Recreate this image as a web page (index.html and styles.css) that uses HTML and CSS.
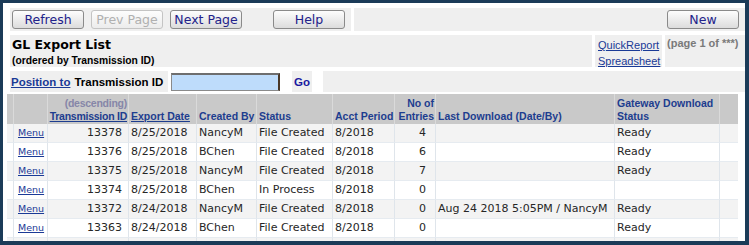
FILE: index.html
```html
<!DOCTYPE html>
<html>
<head>
  <title>GL Export List</title>
  <link rel="stylesheet" href="styles.css">
</head>
<body>
  <div class="frame">
    <div class="row bar">
      <div class="cell tools">
        <button class="btn">Refresh</button>
        <button class="btn" disabled>Prev Page</button>
        <button class="btn">Next Page</button>
        <button class="btn help">Help</button>
      </div>
      <div class="cell tools right">
        <button class="btn">New</button>
      </div>
    </div>

    <div class="row head">
      <div class="cell title">
        <div class="name">GL Export List</div>
        <div class="sub">(ordered by Transmission ID)</div>
      </div>
      <div class="cell links">
        <a href="#">QuickReport</a>
        <a href="#">Spreadsheet</a>
      </div>
      <div class="cell page">(page 1 of ***)</div>
    </div>

    <div class="row pos">
      <div class="cell label"><a href="#">Position to</a> Transmission ID</div>
      <div class="field"><input type="text"></div>
      <div class="cell go">Go</div>
      <div class="spacer"></div>
      <div class="cell fill"></div>
    </div>

    <table class="list">
      <thead>
        <tr>
          <th class="c-pad"></th>
          <th class="c-menu"></th>
          <th class="c-id num"><span class="desc">(descending)</span><br><a href="#">Transmission ID</a></th>
          <th class="c-date"><a href="#">Export Date</a></th>
          <th class="c-by">Created By</th>
          <th class="c-status">Status</th>
          <th class="c-period">Acct Period</th>
          <th class="c-entries num">No of<br>Entries</th>
          <th class="c-last">Last Download (Date/By)</th>
          <th class="c-gw">Gateway Download<br>Status</th>
          <th class="c-end"></th>
        </tr>
      </thead>
      <tbody>
        <tr>
          <td></td><td><a href="#" class="menu">Menu</a></td>
          <td class="id">13378</td><td>8/25/2018</td><td>NancyM</td><td>File Created</td>
          <td>8/2018</td><td class="cnt">4</td><td></td><td>Ready</td><td></td>
        </tr>
        <tr>
          <td></td><td><a href="#" class="menu">Menu</a></td>
          <td class="id">13376</td><td>8/25/2018</td><td>BChen</td><td>File Created</td>
          <td>8/2018</td><td class="cnt">6</td><td></td><td>Ready</td><td></td>
        </tr>
        <tr>
          <td></td><td><a href="#" class="menu">Menu</a></td>
          <td class="id">13375</td><td>8/25/2018</td><td>NancyM</td><td>File Created</td>
          <td>8/2018</td><td class="cnt">7</td><td></td><td>Ready</td><td></td>
        </tr>
        <tr>
          <td></td><td><a href="#" class="menu">Menu</a></td>
          <td class="id">13374</td><td>8/25/2018</td><td>BChen</td><td>In Process</td>
          <td>8/2018</td><td class="cnt">0</td><td></td><td></td><td></td>
        </tr>
        <tr>
          <td></td><td><a href="#" class="menu">Menu</a></td>
          <td class="id">13372</td><td>8/24/2018</td><td>NancyM</td><td>File Created</td>
          <td>8/2018</td><td class="cnt">0</td><td>Aug 24 2018 5:05PM / NancyM</td><td>Ready</td><td></td>
        </tr>
        <tr>
          <td></td><td><a href="#" class="menu">Menu</a></td>
          <td class="id">13363</td><td>8/24/2018</td><td>BChen</td><td>File Created</td>
          <td>8/2018</td><td class="cnt">0</td><td></td><td>Ready</td><td></td>
        </tr>
        <tr>
          <td></td><td></td><td></td><td></td><td></td><td></td>
          <td></td><td></td><td></td><td></td><td></td>
        </tr>
      </tbody>
    </table>
  </div>
</body>
</html>
```

FILE: styles.css
```css
body {
  margin: 0;
  font-family: "Liberation Sans", Arial, sans-serif;
  background: #fff;
}
.frame {
  width: 749px; height: 245px;
  box-sizing: border-box;
  border: 3px solid #1b3b58;
  border-right-width: 4px; border-bottom-width: 4px;
  padding: 5px 0 0 4px;
  overflow: hidden;
  background: #fff;
}
.row {
  display: flex; gap: 3px;
  margin-left: 3px;
}
.cell {
  background: #efefef;
}

/* toolbar */
.bar { height: 23px; }
.tools {
  display: flex; align-items: center; gap: 7px;
  padding-left: 2px; width: 339px;
}
.tools.right {
  flex: 1; width: auto;
  justify-content: flex-end; padding-right: 6px;
}
.btn {
  width: 72px; height: 19px;
  padding: 0;
  font-family: "DejaVu Sans", sans-serif; font-size: 12.5px;
  color: #22228a;
  background: linear-gradient(#fdfdfd, #dcdcdc);
  border: 1px solid #8a8a8a; border-radius: 3px;
}
.btn:disabled {
  color: #b0b0b0; border-color: #c4c4c4;
  background: linear-gradient(#fdfdfd, #ececec);
}
.btn.help { margin-left: 24px; }

/* title */
.head { height: 32px; margin-top: 4px; }
.title { flex: 1; padding: 2px 0 0 2px; }
.name {
  font-family: "DejaVu Sans", sans-serif;
  font-size: 12.5px; font-weight: bold; line-height: 15px;
  color: #000;
}
.sub {
  font-size: 10.3px; font-weight: bold; line-height: 13px;
  margin-top: 2px;
}
.links {
  width: 64px; padding: 2px 0 0 3px;
  display: flex; flex-direction: column;
  font-size: 11px; line-height: 16px;
}
.links a { color: #1a3a96; }
.page {
  width: 78px; padding: 2px 0 0 2px;
  font-size: 11px; font-weight: bold; color: #7a7a7a;
}

/* position row */
.pos { height: 21px; margin-top: 4px; gap: 0; }
.label {
  width: 157px; padding-left: 1px;
  display: flex; align-items: center; gap: 4px;
  font-size: 11.5px; font-weight: bold; color: #000;
  white-space: nowrap;
}
.label a { color: #1a3a96; }
.field {
  width: 121px;
  display: flex; align-items: center;
  padding-left: 3px;
}
.field input {
  width: 109px; height: 18px;
  box-sizing: border-box;
  margin: 0; padding: 0;
  background: #bedcfb;
  border: 1px solid #8a8a8a; border-top: 2px solid #6e6e6e;
  border-right: 2px solid #4a3828;
}
.go {
  width: 18px;
  display: flex; align-items: center; padding-left: 2px;
  font-size: 11.5px; font-weight: bold; color: #1a1aa0;
}
.spacer { width: 11px; }
.fill { flex: 1; }

/* list */
.list {
  margin-top: 2px;
  width: 731px;
  table-layout: fixed;
  border-collapse: separate; border-spacing: 0;
}
.list th, .list td {
  box-sizing: border-box;
  border-left: 1px solid #dfe5eb;
  border-bottom: 1px solid #e6ebf0;
  padding: 2px;
  text-align: left;
  white-space: nowrap; overflow: hidden;
}
.list th:first-child, .list td:first-child { border-left: none; }
.list th {
  background: #c9c9c9;
  border-left-color: #dadada; border-bottom: none;
  vertical-align: bottom;
  padding: 3px 1px 1px 2px;
  font-size: 10.5px; font-weight: bold; line-height: 13px;
  color: #1d3d8f;
}
.list th a { color: #1d3d8f; }
.list th.num { text-align: right; }
.list th.c-id { padding: 3px 1px 1px 0; letter-spacing: -0.25px; }
.desc { color: #8686a8; }
.list td {
  height: 19px;
  font-family: "DejaVu Sans", sans-serif;
  font-size: 11px; line-height: 14px;
  color: #262626;
  vertical-align: middle;
}
.list tbody tr:nth-child(odd) td { background: #f3f3f3; }
.list tbody tr:nth-child(even) td { background: #fff; }
.list td.id { text-align: right; padding-right: 6px; }
.list td.cnt { text-align: right; padding-right: 9px; }
.menu {
  font-size: 9.5px; color: #1a3a96;
  padding-left: 2px;
}

.c-pad { width: 6px; }
.c-menu { width: 34px; }
.c-id { width: 81px; }
.c-date { width: 68px; }
.c-by { width: 60px; }
.c-status { width: 76px; }
.c-period { width: 62px; }
.c-entries { width: 41px; }
.c-last { width: 179px; }
.c-gw { width: 105px; }
.c-end { width: 19px; }
```
